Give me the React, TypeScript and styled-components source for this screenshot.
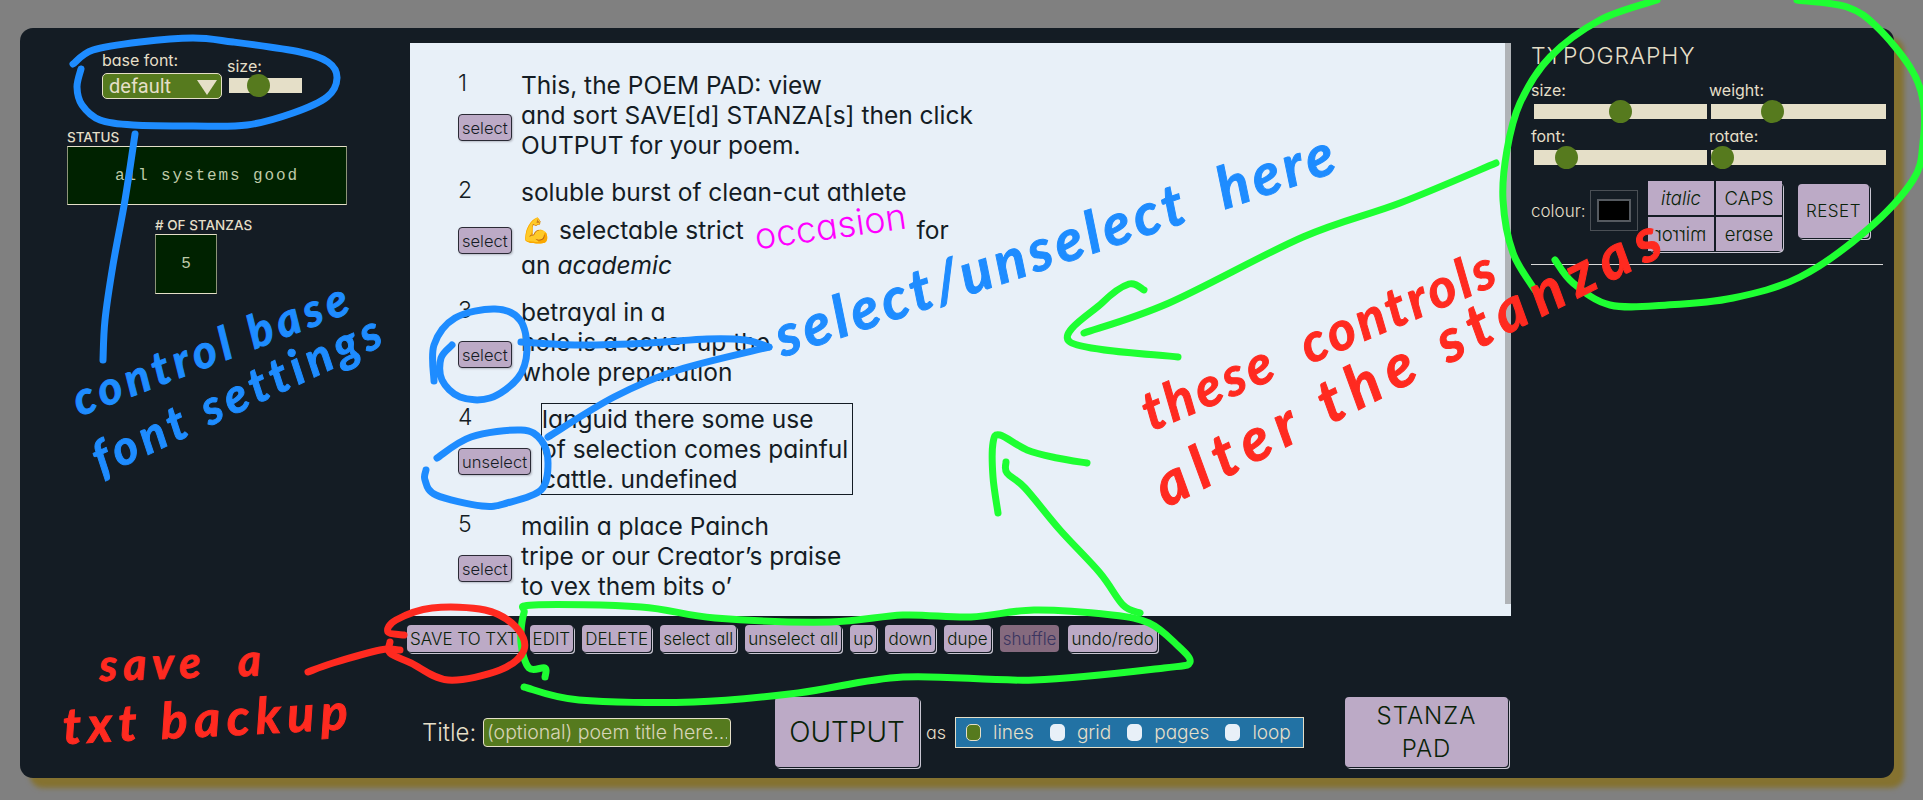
import React from "react"
import styled, { createGlobalStyle } from "styled-components";

const cream = "#e5dfc8";
const ink = "#141c24";
const lilac = "#bcaac6";
const moss = "#567a1e";
const terminal = "#002200";
const uiFont = `Inter, "Noto Sans", sans-serif`;

const GlobalStyle = createGlobalStyle`
    html, body {
        margin: 0;
        height: 800px;
        overflow: hidden;
        background: #808080;
    }
    body {
        font-family: ${uiFont};
        font-feature-settings: "cv11";
        color: ${cream};
    }
`;

const Page = styled.div`
    position: relative;
    width: 1923px;
    height: 800px;
    overflow: hidden;
    padding: 28px 0 0 20px;
    box-sizing: border-box;
`;

const Panel = styled.div`
    display: flex;
    width: 1874px;
    height: 750px;
    background: ${ink};
    border-radius: 13px;
    box-shadow: 10px 10px 5px #857230;
`;

const LeftCol = styled.div`
    width: 390px;
    flex: none;
    padding: 22px 0 0 47px;
    box-sizing: border-box;
`;

const FontControls = styled.div`
    display: flex;
    gap: 5px;
    margin-left: 35px;
`;

const FieldLabel = styled.div`
    font-size: 16px;
    line-height: 20px;
`;

const SelectWrap = styled.div`
    position: relative;
    width: 120px;
    height: 26px;
    margin-top: 3px;

    &::after {
        content: "";
        position: absolute;
        right: 5px;
        top: 7px;
        border-left: 10px solid transparent;
        border-right: 10px solid transparent;
        border-top: 15px solid ${cream};
    }
`;

const FontSelect = styled.select`
    appearance: none;
    width: 100%;
    height: 100%;
    padding: 0 0 0 6px;
    background: ${moss};
    color: ${cream};
    border: 1px solid ${cream};
    border-radius: 5px;
    font-family: Roboto, sans-serif;
    font-size: 20px;
`;

const SizeField = styled.div`
    padding-top: 6px;
`;

const Range = styled.input.attrs({ type: "range" })<{ $width: number }>`
    appearance: none;
    display: block;
    width: ${props => props.$width}px;
    height: 15px;
    margin: 0;
    background: ${cream};
    overflow: visible;

    &::-webkit-slider-thumb {
        appearance: none;
        width: 23px;
        height: 23px;
        border-radius: 50%;
        background: ${moss};
    }
`;

const SizeRange = styled(Range)`
    margin: 2px 0 0 2px;
`;

const DisplayLabel = styled.div`
    font-size: 13.5px;
    font-weight: 500;
    line-height: 16px;
    white-space: nowrap;
`;

const StatusGroup = styled.div`
    margin-top: 30px;
`;

const Terminal = styled.div`
    display: flex;
    align-items: center;
    justify-content: center;
    box-sizing: border-box;
    background: ${terminal};
    border: 1px solid ${cream};
    border-left-color: #8d9478;
    border-right-color: #8d9478;
    color: #bfcaa9;
    font-family: "Liberation Mono", monospace;
    font-size: 16px;
    letter-spacing: 1.9px;
`;

const StatusBox = styled(Terminal)`
    width: 280px;
    height: 59px;
    margin-top: 1px;
`;

const CountGroup = styled.div`
    margin: 12px 0 0 88px;
`;

const CountBox = styled(Terminal)`
    width: 62px;
    height: 60px;
    margin-top: 1px;
    letter-spacing: 0;
`;

const CenterCol = styled.div`
    width: 1101px;
    flex: none;
    padding-top: 15px;
`;

const PoemPad = styled.div`
    position: relative;
    height: 573px;
    box-sizing: border-box;
    padding: 27px 0 0 48px;
    background: #e8f0f8;
    color: ${ink};

    &::after {
        content: "";
        position: absolute;
        right: 0;
        top: 0;
        width: 6px;
        height: 561px;
        background: #b0b3b7;
    }
`;

const Stanza = styled.div`
    display: flex;
    margin-bottom: 17px;
`;

const StanzaSide = styled.div<{ $lift?: number }>`
    width: 63px;
    flex: none;
    display: flex;
    flex-direction: column;
    justify-content: space-between;
    align-items: flex-start;
    padding-bottom: ${props => props.$lift ?? 19}px;
    font-size: 23px;
    line-height: 26px;
    font-weight: 350;
`;

const StanzaText = styled.div<{ $selected?: boolean }>`
    font-size: 24.5px;
    line-height: 30px;
    font-weight: 400;
    width: ${props => (props.$selected ? "310px" : "auto")};
    margin-left: ${props => (props.$selected ? "21px" : "0")};
    outline: ${props => (props.$selected ? `1px solid ${ink}` : "none")};
`;

const SelectButton = styled.button`
    height: 27px;
    padding: 0 3px;
    background: ${lilac};
    color: ${ink};
    border: 1px solid #2a2a35;
    border-radius: 4px;
    box-shadow: 1px 1px 2px #b8bcc6;
    font-family: ${uiFont};
    font-feature-settings: "cv11";
    font-size: 16.5px;
    font-weight: 300;
`;

const LooseLine = styled.div`
    padding-top: 3px;
    line-height: 40px;
    white-space: nowrap;
`;

const Strong = styled.span`
    display: inline-block;
    margin: 0 10px;
    color: #ff00ff;
    font-size: 36px;
    font-weight: 350;
    line-height: 30px;
    transform: rotate(-8deg);
`;

const Toolbar = styled.div`
    display: flex;
    gap: 9px;
    margin: 9px 0 0 -3px;
`;

const ActionButton = styled.button<{ $off?: boolean }>`
    height: 27px;
    padding: 0 3px;
    background: ${props => (props.$off ? "#856a7e" : lilac)};
    color: ${props => (props.$off ? "#3a3560" : "#0a2208")};
    border: none;
    border-radius: 4px;
    box-shadow: ${props => (props.$off ? "none" : `1px 1px 0 ${ink}, 2px 2px 0 #c9c6d2`)};
    font-family: ${uiFont};
    font-feature-settings: "cv11";
    font-size: 17px;
    font-weight: 350;
    white-space: nowrap;
`;

const BottomRow = styled.div`
    display: flex;
    align-items: center;
    margin-top: 45px;
    height: 70px;
    padding-left: 12px;
`;

const TitleLabel = styled.span`
    width: 61px;
    flex: none;
    font-size: 24px;
    font-weight: 350;
`;

const TitleInput = styled.input`
    width: 248px;
    flex: none;
    height: 29px;
    box-sizing: border-box;
    padding: 0 3px;
    background: ${moss};
    border: 1px solid ${cream};
    border-radius: 4px;
    color: ${cream};
    font-family: ${uiFont};
    font-size: 19.5px;
    font-weight: 300;

    &::placeholder {
        color: ${cream};
        opacity: 0.9;
    }
`;

const OutputButton = styled(ActionButton)`
    width: 144px;
    height: 70px;
    flex: none;
    margin-left: 44px;
    font-size: 28px;
`;

const AsLabel = styled.span`
    width: 29px;
    flex: none;
    padding-left: 7px;
    font-size: 18px;
    font-weight: 350;
`;

const FormatGroup = styled.div`
    display: flex;
    align-items: center;
    width: 349px;
    flex: none;
    height: 31px;
    box-sizing: border-box;
    padding-left: 10px;
    background: #2272a4;
    border: 1px solid ${cream};
`;

const FormatOption = styled.label`
    display: flex;
    align-items: center;
    gap: 12px;
    margin-right: 16px;
    font-size: 19px;
    font-weight: 350;
`;

const FormatRadio = styled.input.attrs({ type: "radio", name: "format" })`
    appearance: none;
    width: 15px;
    height: 17px;
    margin: 0;
    border-radius: 5px;
    background: #e8f0f8;

    &:checked {
        background: ${moss};
        border: 1px solid ${cream};
        box-sizing: border-box;
    }
`;

const PadButton = styled(ActionButton)`
    width: 163px;
    height: 70px;
    flex: none;
    margin-left: 41px;
    font-size: 24px;
    line-height: 33px;
    letter-spacing: 1px;
`;

const RightCol = styled.div`
    flex: 1;
    padding: 13px 0 0 20px;
`;

const SectionTitle = styled.div`
    font-size: 23px;
    line-height: 30px;
    font-weight: 350;
    letter-spacing: 0.8px;
`;

const SliderGrid = styled.div`
    display: grid;
    grid-template-columns: 178px 178px;
    row-gap: 7px;
    margin-top: 9px;
`;

const SliderLabel = styled.div`
    font-size: 16px;
    line-height: 20px;
    margin-bottom: 4px;
`;

const TypoRange = styled(Range)<{ $inset: number }>`
    margin-left: ${props => props.$inset}px;
`;

const StyleRow = styled.div`
    display: flex;
    align-items: center;
    margin-top: 16px;
`;

const ColourLabel = styled.span`
    width: 59px;
    flex: none;
    font-size: 17px;
    font-weight: 350;
`;

const ColourWell = styled.div`
    display: flex;
    align-items: center;
    justify-content: center;
    width: 48px;
    height: 41px;
    box-sizing: border-box;
    border: 1px solid #4a4f55;
`;

const ColourSwatch = styled.div`
    width: 34px;
    height: 23px;
    box-sizing: border-box;
    background: #000;
    border: 2px solid #555a60;
`;

const ToggleGrid = styled.div`
    display: grid;
    grid-template-columns: 66px 66px;
    grid-auto-rows: 34px;
    gap: 2px;
    margin: 0 0 -11px 10px;
    border-radius: 5px;
    box-shadow: 1px 1px 0 ${ink}, 2px 2px 0 #c9c6d2;
`;

const ToggleButton = styled.button<{ $italic?: boolean }>`
    padding: 0;
    background: ${lilac};
    color: #0a2208;
    border: none;
    font-family: ${uiFont};
    font-feature-settings: "cv11";
    font-size: 18.5px;
    font-weight: 350;
    font-style: ${props => (props.$italic ? "italic" : "normal")};
`;

const MirrorText = styled.span`
    display: inline-block;
    transform: scaleX(-1);
`;

const ResetButton = styled(ActionButton)`
    width: 71px;
    height: 54px;
    flex: none;
    margin-left: 16px;
    font-size: 17px;
    letter-spacing: 0.5px;
`;

const Rule = styled.div`
    height: 1px;
    width: 352px;
    margin-top: 24px;
    background: #d8d8d8;
`;

const Overlay = styled.svg`
    position: absolute;
    inset: 0;
    pointer-events: none;
`;

const Scrawl = styled.div<{ $colour: string, $size: number, $angle: number, $x: number, $y: number, $spread: number }>`
    position: absolute;
    left: ${props => props.$x}px;
    top: ${props => props.$y}px;
    color: ${props => props.$colour};
    font-family: Lato, sans-serif;
    font-style: italic;
    font-weight: 700;
    font-size: ${props => props.$size}px;
    letter-spacing: ${props => props.$spread}px;
    line-height: 1;
    white-space: pre;
    -webkit-text-stroke: 1px ${props => props.$colour};
    transform: rotate(${props => props.$angle}deg);
    transform-origin: left bottom;
    pointer-events: none;
`;

const blue = "#1e8cff";
const green = "#1eff32";
const red = "#ff2a20";

type Point = [number, number];

// catmull-rom through the hand drawn points so the pen lines stay round
const smooth = (pts: Point[]) => {
    let d = `M${pts[0][0]} ${pts[0][1]}`;
    for (let i = 0; i < pts.length - 1; i++) {
        const p0 = pts[Math.max(i - 1, 0)];
        const p1 = pts[i];
        const p2 = pts[i + 1];
        const p3 = pts[Math.min(i + 2, pts.length - 1)];
        const c1 = [p1[0] + (p2[0] - p0[0]) / 6, p1[1] + (p2[1] - p0[1]) / 6];
        const c2 = [p2[0] - (p3[0] - p1[0]) / 6, p2[1] - (p3[1] - p1[1]) / 6];
        d += ` C${c1[0]} ${c1[1]} ${c2[0]} ${c2[1]} ${p2[0]} ${p2[1]}`;
    }
    return d;
};

const penLines: { colour: string, pts: Point[] }[] = [
    { colour: blue, pts: [[73, 64], [93, 50], [140, 42], [193, 38], [233, 42], [300, 52], [328, 62], [337, 78], [327, 97], [293, 113], [247, 125], [193, 126], [133, 125], [100, 120], [82, 105], [77, 87], [81, 69]] },
    { colour: blue, pts: [[135, 134], [125, 200], [113, 265], [105, 320], [103, 360]] },
    { colour: blue, pts: [[434, 381], [434, 345], [455, 318], [495, 309], [520, 320], [527, 350], [518, 378], [490, 398], [460, 397], [442, 380], [441, 358], [452, 345]] },
    { colour: blue, pts: [[437, 458], [471, 437], [521, 430], [541, 440], [548, 463], [541, 490], [507, 503], [482, 506], [436, 495], [425, 480], [426, 470]] },
    { colour: blue, pts: [[548, 437], [614, 397], [678, 370], [769, 347]] },
    { colour: blue, pts: [[521, 342], [579, 345], [650, 343], [707, 339], [745, 340], [769, 347]] },
    { colour: green, pts: [[1657, 0], [1600, 20], [1550, 57], [1520, 103], [1507, 150], [1503, 200], [1513, 253], [1537, 293]] },
    { colour: green, pts: [[1555, 260], [1573, 283], [1610, 305], [1667, 305], [1733, 298], [1800, 277], [1867, 230], [1913, 180], [1923, 143], [1923, 100], [1910, 67], [1877, 27], [1847, 7], [1797, 0]] },
    { colour: green, pts: [[1496, 163], [1400, 203], [1303, 237], [1169, 303], [1084, 333]] },
    { colour: green, pts: [[1144, 290], [1129, 284], [1102, 303], [1070, 342], [1178, 357]] },
    { colour: green, pts: [[998, 513], [993, 477], [993, 443], [1000, 435], [1027, 450], [1057, 458], [1087, 463]] },
    { colour: green, pts: [[1006, 462], [1007, 473], [1025, 488], [1060, 530], [1100, 573], [1123, 605], [1140, 613]] },
    { colour: green, pts: [[545, 677], [545, 668], [529, 668], [521, 643], [524, 613], [534, 605], [641, 607], [715, 618], [830, 622], [903, 615], [971, 617], [1034, 610], [1112, 615], [1149, 623], [1175, 643], [1190, 662], [1164, 668], [1034, 680], [903, 677], [798, 693], [694, 702], [579, 700], [524, 687]] },
    { colour: red, pts: [[404, 635], [388, 632], [396, 620], [432, 608], [485, 610], [516, 627], [524, 650], [500, 670], [448, 680], [411, 663], [390, 653], [390, 642]] },
    { colour: red, pts: [[308, 672], [333, 663], [380, 650], [400, 650]] },
];

const PenLayer = () => (
    <Overlay width={1923} height={800} viewBox="0 0 1923 800" fill="none">
        {penLines.map((line, i) => (
            <path key={i} d={smooth(line.pts)} stroke={line.colour} strokeWidth={7} strokeLinecap="round" strokeLinejoin="round" />
        ))}
    </Overlay>
);

const toolbarActions = ["SAVE TO TXT", "EDIT", "DELETE", "select all", "unselect all", "up", "down", "dupe", "shuffle", "undo/redo"];

const App = () => {
    return (
        <Page>
            <GlobalStyle />
            <Panel>
                <LeftCol>
                    <FontControls>
                        <div>
                            <FieldLabel>base font:</FieldLabel>
                            <SelectWrap>
                                <FontSelect defaultValue="default">
                                    <option value="default">default</option>
                                </FontSelect>
                            </SelectWrap>
                        </div>
                        <SizeField>
                            <FieldLabel>size:</FieldLabel>
                            <SizeRange $width={73} defaultValue={35} />
                        </SizeField>
                    </FontControls>
                    <StatusGroup>
                        <DisplayLabel>STATUS</DisplayLabel>
                        <StatusBox>all systems good</StatusBox>
                    </StatusGroup>
                    <CountGroup>
                        <DisplayLabel># OF STANZAS</DisplayLabel>
                        <CountBox>5</CountBox>
                    </CountGroup>
                </LeftCol>
                <CenterCol>
                    <PoemPad>
                        <Stanza>
                            <StanzaSide>1<SelectButton>select</SelectButton></StanzaSide>
                            <StanzaText>
                                This, the POEM PAD: view<br />
                                and sort SAVE[d] STANZA[s] then click<br />
                                OUTPUT for your poem.
                            </StanzaText>
                        </Stanza>
                        <Stanza>
                            <StanzaSide $lift={26}>2<SelectButton>select</SelectButton></StanzaSide>
                            <StanzaText>
                                soluble burst of clean-cut athlete
                                <LooseLine>💪 selectable strict<Strong>occasion</Strong>for</LooseLine>
                                an <em>academic</em>
                            </StanzaText>
                        </Stanza>
                        <Stanza>
                            <StanzaSide>3<SelectButton>select</SelectButton></StanzaSide>
                            <StanzaText>
                                betrayal in a<br />
                                hole is a cover up the<br />
                                whole preparation
                            </StanzaText>
                        </Stanza>
                        <Stanza>
                            <StanzaSide>4<SelectButton>unselect</SelectButton></StanzaSide>
                            <StanzaText $selected>
                                languid there some use<br />
                                of selection comes painful<br />
                                cattle. undefined
                            </StanzaText>
                        </Stanza>
                        <Stanza>
                            <StanzaSide>5<SelectButton>select</SelectButton></StanzaSide>
                            <StanzaText>
                                mailin a place Painch<br />
                                tripe or our Creator’s praise<br />
                                to vex them bits o’
                            </StanzaText>
                        </Stanza>
                    </PoemPad>
                    <Toolbar>
                        {toolbarActions.map(action => (
                            <ActionButton key={action} $off={action === "shuffle"}>{action}</ActionButton>
                        ))}
                    </Toolbar>
                    <BottomRow>
                        <TitleLabel>Title:</TitleLabel>
                        <TitleInput placeholder="(optional) poem title here..." />
                        <OutputButton>OUTPUT</OutputButton>
                        <AsLabel>as</AsLabel>
                        <FormatGroup>
                            <FormatOption><FormatRadio defaultChecked />lines</FormatOption>
                            <FormatOption><FormatRadio />grid</FormatOption>
                            <FormatOption><FormatRadio />pages</FormatOption>
                            <FormatOption><FormatRadio />loop</FormatOption>
                        </FormatGroup>
                        <PadButton>STANZA<br />PAD</PadButton>
                    </BottomRow>
                </CenterCol>
                <RightCol>
                    <SectionTitle>TYPOGRAPHY</SectionTitle>
                    <SliderGrid>
                        <div>
                            <SliderLabel>size:</SliderLabel>
                            <TypoRange $width={173} $inset={3} defaultValue={50} />
                        </div>
                        <div>
                            <SliderLabel>weight:</SliderLabel>
                            <TypoRange $width={175} $inset={2} defaultValue={33} />
                        </div>
                        <div>
                            <SliderLabel>font:</SliderLabel>
                            <TypoRange $width={173} $inset={3} defaultValue={14} />
                        </div>
                        <div>
                            <SliderLabel>rotate:</SliderLabel>
                            <TypoRange $width={175} $inset={2} defaultValue={0} />
                        </div>
                    </SliderGrid>
                    <StyleRow>
                        <ColourLabel>colour:</ColourLabel>
                        <ColourWell><ColourSwatch /></ColourWell>
                        <ToggleGrid>
                            <ToggleButton $italic>italic</ToggleButton>
                            <ToggleButton>CAPS</ToggleButton>
                            <ToggleButton><MirrorText>mirror</MirrorText></ToggleButton>
                            <ToggleButton>erase</ToggleButton>
                        </ToggleGrid>
                        <ResetButton>RESET</ResetButton>
                    </StyleRow>
                    <Rule />
                </RightCol>
            </Panel>
            <PenLayer />
            <Scrawl $colour={blue} $size={46} $spread={5} $angle={-21} $x={82} $y={376}>control base</Scrawl>
            <Scrawl $colour={blue} $size={48} $spread={5} $angle={-25} $x={104} $y={434}>font settings</Scrawl>
            <Scrawl $colour={blue} $size={58} $spread={4.2} $angle={-18.5} $x={785} $y={306}>{"select/unselect  here"}</Scrawl>
            <Scrawl $colour={red} $size={54} $spread={3.5} $angle={-23} $x={1154} $y={384}>{"these  controls"}</Scrawl>
            <Scrawl $colour={red} $size={60} $spread={9} $angle={-27} $x={1170} $y={454}>alter the stanzas</Scrawl>
            <Scrawl $colour={red} $size={44} $spread={6} $angle={-2} $x={100} $y={642}>{"save  a"}</Scrawl>
            <Scrawl $colour={red} $size={50} $spread={6.5} $angle={-3} $x={64} $y={700}>txt backup</Scrawl>
        </Page>
    );
}

export default App;
